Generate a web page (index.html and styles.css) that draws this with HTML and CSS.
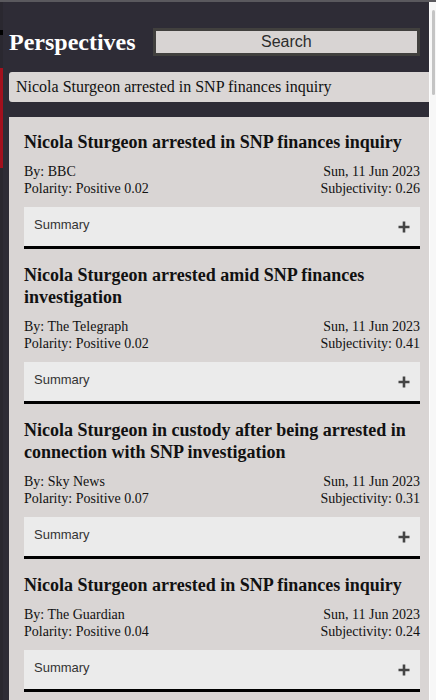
FILE: index.html
```html
<!DOCTYPE html>
<html lang="en">
<head>
<meta charset="utf-8">
<title>Perspectives</title>
<link rel="stylesheet" href="styles.css">
</head>
<body>
<div class="frame">
  <div class="edge">
    <span class="edge-dark"></span>
    <span class="edge-black"></span>
    <span class="edge-dark2"></span>
    <span class="edge-red"></span>
  </div>
  <main class="panel">
    <header class="header">
      <h1 class="brand">Perspectives</h1>
      <div class="search">Search</div>
    </header>
    <div class="query">Nicola Sturgeon arrested in SNP finances inquiry</div>
    <section class="list">
      <article class="card">
        <h2 class="card-title">Nicola Sturgeon arrested in SNP finances inquiry</h2>
        <div class="meta">
          <div><div>By: BBC</div><div>Polarity: Positive 0.02</div></div>
          <div class="meta-right"><div>Sun, 11 Jun 2023</div><div>Subjectivity: 0.26</div></div>
        </div>
        <div class="summary"><span>Summary</span><svg class="plus" width="12" height="12" viewBox="0 0 12 12"><path d="M6 0.5v11M0.5 6h11" stroke="#444" stroke-width="2.6"/></svg></div>
      </article>
      <article class="card">
        <h2 class="card-title">Nicola Sturgeon arrested amid SNP finances investigation</h2>
        <div class="meta">
          <div><div>By: The Telegraph</div><div>Polarity: Positive 0.02</div></div>
          <div class="meta-right"><div>Sun, 11 Jun 2023</div><div>Subjectivity: 0.41</div></div>
        </div>
        <div class="summary"><span>Summary</span><svg class="plus" width="12" height="12" viewBox="0 0 12 12"><path d="M6 0.5v11M0.5 6h11" stroke="#444" stroke-width="2.6"/></svg></div>
      </article>
      <article class="card">
        <h2 class="card-title">Nicola Sturgeon in custody after being arrested in connection with SNP investigation</h2>
        <div class="meta">
          <div><div>By: Sky News</div><div>Polarity: Positive 0.07</div></div>
          <div class="meta-right"><div>Sun, 11 Jun 2023</div><div>Subjectivity: 0.31</div></div>
        </div>
        <div class="summary"><span>Summary</span><svg class="plus" width="12" height="12" viewBox="0 0 12 12"><path d="M6 0.5v11M0.5 6h11" stroke="#444" stroke-width="2.6"/></svg></div>
      </article>
      <article class="card">
        <h2 class="card-title">Nicola Sturgeon arrested in SNP finances inquiry</h2>
        <div class="meta">
          <div><div>By: The Guardian</div><div>Polarity: Positive 0.04</div></div>
          <div class="meta-right"><div>Sun, 11 Jun 2023</div><div>Subjectivity: 0.24</div></div>
        </div>
        <div class="summary"><span>Summary</span><svg class="plus" width="12" height="12" viewBox="0 0 12 12"><path d="M6 0.5v11M0.5 6h11" stroke="#444" stroke-width="2.6"/></svg></div>
      </article>
    </section>
  </main>
  <div class="scrollbar"><span class="thumb"></span></div>
</div>
</body>
</html>
```
FILE: styles.css
```css
html, body {
  margin: 0;
  height: 700px;
  overflow: hidden;
  background: #2e2c36;
}
.frame {
  display: flex;
  border-top: 2px solid #5a595e;
  height: 698px;
}
.edge {
  width: 3px;
  display: flex;
  flex-direction: column;
  background: #2a2830;
}
.edge span { display: block; width: 3px; }
.edge-dark { height: 28px; background: #2a2830; }
.edge-black { height: 5px; background: #000; }
.edge-dark2 { height: 33px; background: #2a2830; }
.edge-red { height: 100px; background: #a3101d; }
.panel {
  flex: 1;
  min-width: 0;
  padding-left: 6px;
  background: #2e2c36;
}
.header {
  display: flex;
  align-items: center;
  gap: 17px;
  padding: 26px 9px 0 0;
  height: 28px;
}
.brand {
  margin: 0;
  font-family: "Liberation Serif", "Times New Roman", serif;
  font-weight: bold;
  font-size: 24px;
  color: #ffffff;
  white-space: nowrap;
}
.search {
  flex: 1;
  height: 22px;
  border: 3px solid #41403e;
  background: #d8d4d3;
  color: #2c2c2c;
  font-family: "Liberation Sans", Arial, sans-serif;
  font-size: 16px;
  line-height: 22px;
  text-align: center;
}
.query {
  margin-top: 16px;
  height: 30px;
  line-height: 30px;
  padding-left: 7px;
  background: #dad6d5;
  border-radius: 3px 0 0 3px;
  font-family: "Liberation Serif", "Times New Roman", serif;
  font-size: 16px;
  color: #111;
  white-space: nowrap;
}
.list {
  margin-top: 15px;
  background: #d9d5d4;
  padding: 0 9px 20px 15px;
}
.card {
  padding-top: 15px;
}
.card:first-child {
  padding-top: 14px;
}
.card-title {
  margin: 0;
  font-family: "Liberation Serif", "Times New Roman", serif;
  font-weight: bold;
  font-size: 18px;
  line-height: 22px;
  color: #111;
}
.meta {
  display: flex;
  justify-content: space-between;
  margin-top: 10px;
  font-family: "Liberation Serif", "Times New Roman", serif;
  font-size: 14px;
  line-height: 17px;
  color: #111;
}
.meta-right { text-align: right; }
.summary {
  margin-top: 10px;
  height: 39px;
  border-bottom: 3px solid #000;
  background: #ebebeb;
  display: flex;
  justify-content: space-between;
  align-items: center;
  padding: 0 10px 0 10px;
  font-family: "Liberation Sans", Arial, sans-serif;
  font-size: 13px;
  color: #333;
}
.summary span {
  align-self: flex-start;
  padding-top: 10px;
}
.plus { display: block; }
.scrollbar {
  width: 6px;
  background: #f7f7f7;
  border-left: 1px solid #fdfdfd;
  position: relative;
}
.thumb {
  position: absolute;
  top: 8px;
  left: 2px;
  width: 3px;
  height: 85px;
  border-radius: 2px;
  background: #c4c4c4;
}
```
